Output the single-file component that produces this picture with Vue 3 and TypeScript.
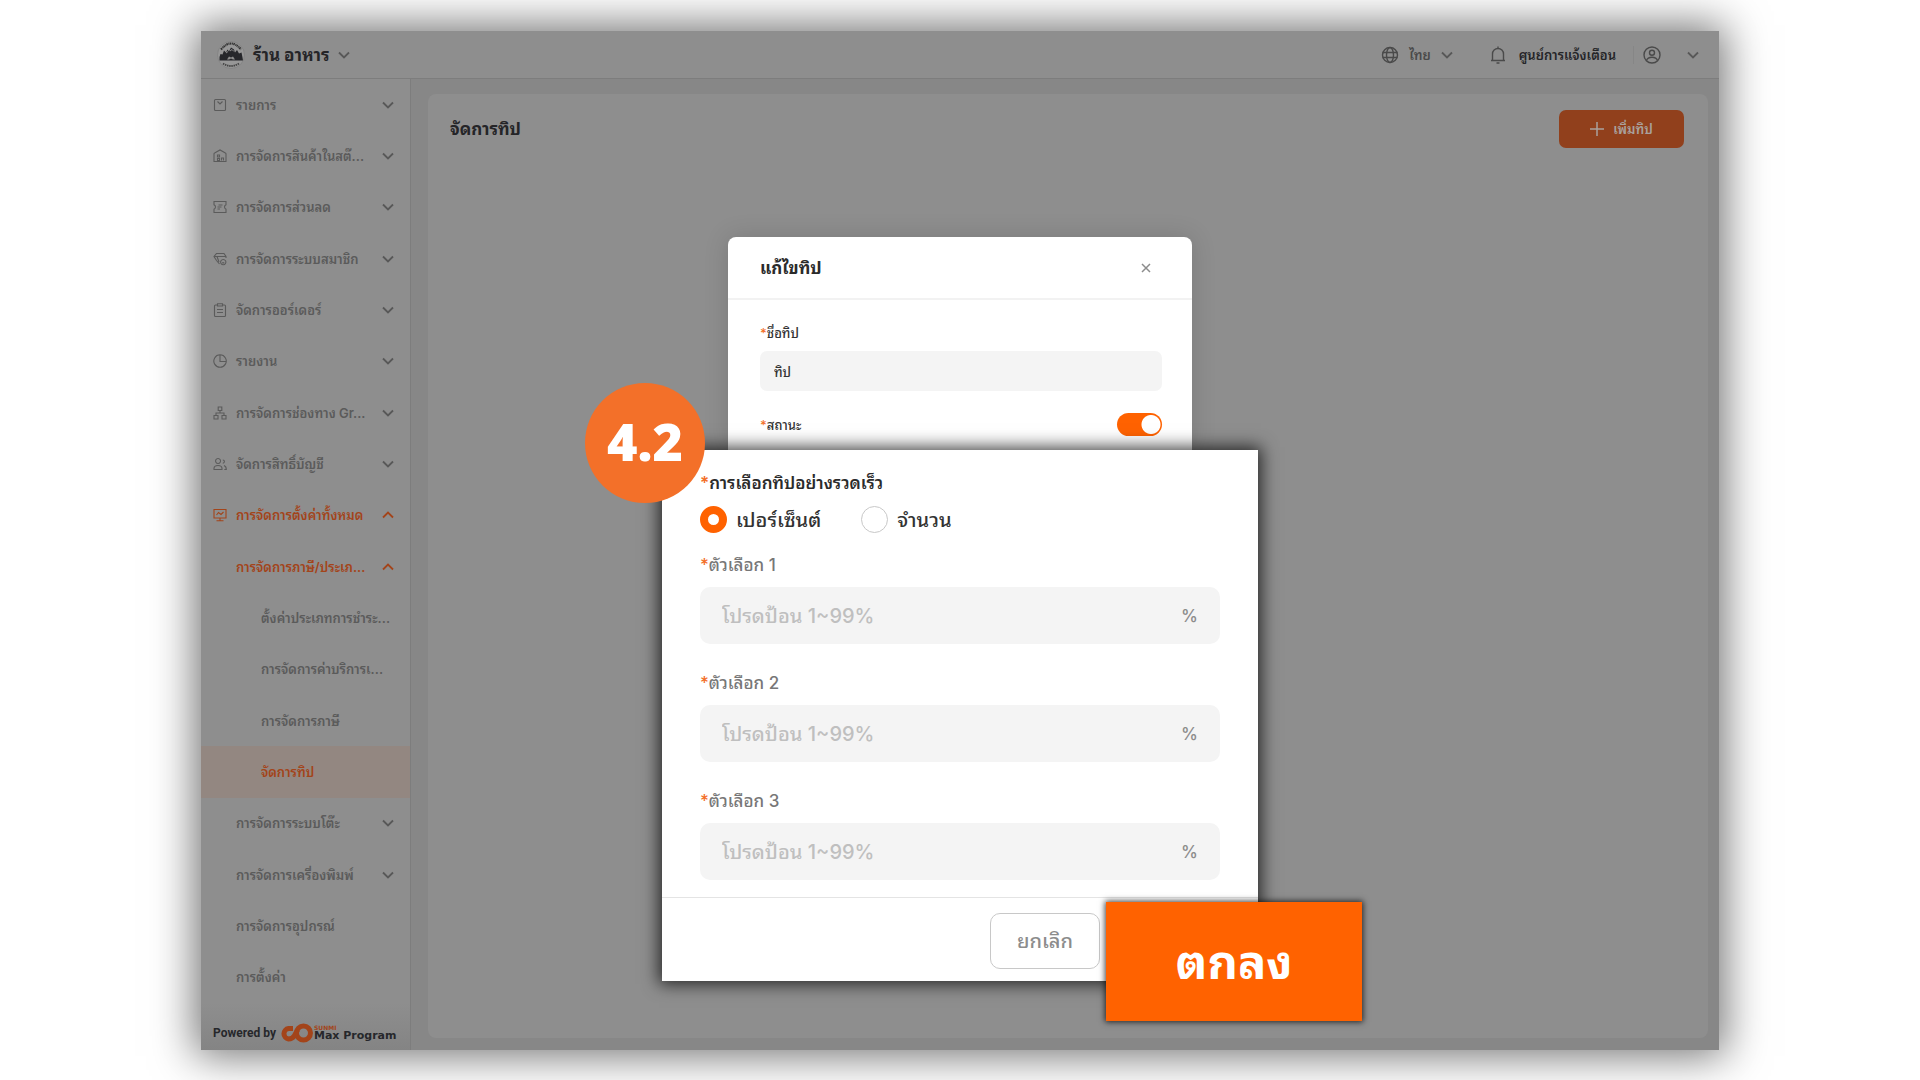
<script setup lang="ts">
import { ref } from 'vue'

interface MenuItem {
  label: string
  level: 1 | 2 | 3
  icon?: string
  arrow?: 'down' | 'up'
  tone?: 'accent' | 'active'
}

const menu: MenuItem[] = [
  { label: 'รายการ', level: 1, icon: 'list', arrow: 'down' },
  { label: 'การจัดการสินค้าในสต๊...', level: 1, icon: 'stock', arrow: 'down' },
  { label: 'การจัดการส่วนลด', level: 1, icon: 'coupon', arrow: 'down' },
  { label: 'การจัดการระบบสมาชิก', level: 1, icon: 'member', arrow: 'down' },
  { label: 'จัดการออร์เดอร์', level: 1, icon: 'order', arrow: 'down' },
  { label: 'รายงาน', level: 1, icon: 'report', arrow: 'down' },
  { label: 'การจัดการช่องทาง Gr...', level: 1, icon: 'channel', arrow: 'down' },
  { label: 'จัดการสิทธิ์บัญชี', level: 1, icon: 'users', arrow: 'down' },
  { label: 'การจัดการตั้งค่าทั้งหมด', level: 1, icon: 'settings', arrow: 'up', tone: 'accent' },
  { label: 'การจัดการภาษี/ประเภ...', level: 2, arrow: 'up', tone: 'accent' },
  { label: 'ตั้งค่าประเภทการชำระ...', level: 3 },
  { label: 'การจัดการค่าบริการเ...', level: 3 },
  { label: 'การจัดการภาษี', level: 3 },
  { label: 'จัดการทิป', level: 3, tone: 'active' },
  { label: 'การจัดการระบบโต๊ะ', level: 2, arrow: 'down' },
  { label: 'การจัดการเครื่องพิมพ์', level: 2, arrow: 'down' },
  { label: 'การจัดการอุปกรณ์', level: 2 },
  { label: 'การตั้งค่า', level: 2 },
]

const icons: Record<string, string> = {
  list: 'M1.5 2.5a1 1 0 0 1 1-1h9a1 1 0 0 1 1 1v9a1 1 0 0 1-1 1h-9a1 1 0 0 1-1-1zM4.5 3.5l2.5 2.5 2.5-2.5',
  stock: 'M1 12.500V5q0-.700.600-1L7 1l5.400 3q.600.300.600 1v7.500zM4.500 6h2v2h-2zM4.500 9.500h2v2h-2zM8.500 11.500v-2.500h2v2.500',
  coupon: 'M1 1.500h12v3.300q-1.500.700-1.500 2.200t1.500 2.200v3.300H1V9.200q1.500-.700 1.500-2.200T1 4.800zM5.500 5h4M4.500 7h4M4.500 9h2.500',
  member: 'M13 6V4.500l-2-3H3.500L1 4.500l2.500 4 3 3.500M1 4.500h12M4 4.500l2 5.500M10.200 7.500a2.600 2.600 0 1 0 .1 0zM9.200 10.500q1 .8 2 0',
  order: 'M4 2H2.500a1 1 0 0 0-1 1v9.500a1 1 0 0 0 1 1h9a1 1 0 0 0 1-1V3a1 1 0 0 0-1-1H10M4.500.700h5v2.300h-5zM4 6.500h6M4 9.500h6',
  report: 'M7 .800a6.200 6.200 0 1 0 .1 0zM7 1v6.500h6',
  channel: 'M5.200 1h3.600v3.500H5.200zM7 4.500V7M3 9.500V7h8v2.500M1 9.500h4V13H1zM9 9.500h4V13H9z',
  users: 'M5 1.500a2.500 2.500 0 1 0 .1 0zM1 12.500v-1q0-3 4-3t4 3v1zM9.800 3a1.600 1.600 0 1 1 0 3.200M11 8.500q2.300.800 2.300 4h-2',
  settings: 'M1 1.500h12v8.500H1zM7 10v2.500M3.500 12.800h7M3.500 7l2-2.500 2.500 2 2.500-2.500',
}

const options = [1, 2, 3]
const tipName = ref('ทิป')
const enabled = ref(true)
const mode = ref('percent')
const values = ref<string[]>(['', '', ''])
</script>

<template>
  <div class="stage">
    <div class="window">
      <header class="topbar">
        <button class="plain shop" type="button">
          <svg class="shop-logo" viewBox="0 0 28 28" aria-hidden="true">
            <circle cx="14" cy="14" r="13.500" fill="#979797" stroke="#7c7c7c" stroke-width=".6" />
            <path d="M4 8.500Q14-3.500 24 8.500" fill="none" stroke="#333" stroke-width="2.200" stroke-dasharray="1.500 .6 1 .5" />
            <path d="M2.500 16l1-3 2 .5L7 9.500l2 2 1.500-3 1.500 2 2-4 3 2 1 3 2-2.500 2 3.500 2.500-1 1 5 .5 3H2.500z" fill="#26272b" />
            <path d="M10 18.500l2-3 2 1 2-1 2 3h-2l-2-1-2 1z" fill="#8e8e8e" />
            <path d="M9 12l2-1.500M13 10l2-1.500 2 2" stroke="#8e8e8e" fill="none" />
            <path d="M6 22.500q8 5 16 0" fill="none" stroke="#444" stroke-width="1.800" stroke-dasharray="1.500 .7" />
          </svg>
          <span>ร้าน อาหาร</span>
          <svg class="chev" viewBox="0 0 12 8"><path d="M1 1.500l5 5 5-5" /></svg>
        </button>
        <div class="tools">
          <button class="plain lang" type="button">
            <svg class="tool-icon globe" viewBox="0 0 18 18" aria-hidden="true">
              <circle cx="9" cy="9" r="7.500" /><ellipse cx="9" cy="9" rx="3.500" ry="7.500" /><path d="M1.500 6.500h15M1.500 11.500h15" />
            </svg>
            <span>ไทย</span>
            <svg class="chev" viewBox="0 0 12 8"><path d="M1 1.500l5 5 5-5" /></svg>
          </button>
          <button class="plain notice" type="button">
            <svg class="tool-icon bell" viewBox="0 0 18 18" aria-hidden="true">
              <path d="M9 .5v1.500M2 14.500h14M3.500 14.500V8a5.500 5.500 0 0 1 11 0v6.500M7.500 17h3" />
            </svg>
            <span>ศูนย์การแจ้งเตือน</span>
          </button>
          <button class="plain account" type="button" aria-label="บัญชี">
            <svg class="tool-icon" viewBox="0 0 18 18" aria-hidden="true">
              <circle cx="9" cy="9" r="8" /><circle cx="9" cy="6.800" r="2.500" /><path d="M3.500 14.500q1-3.300 5.500-3.300t5.500 3.300" />
            </svg>
            <svg class="chev" viewBox="0 0 12 8"><path d="M1 1.500l5 5 5-5" /></svg>
          </button>
        </div>
      </header>

      <div class="body">
        <aside class="sidebar">
          <nav class="menu">
            <a
              v-for="item in menu"
              :key="item.label"
              href="#"
              class="menu-item"
              :class="['level-' + item.level, item.tone]"
            >
              <svg v-if="item.icon" class="menu-icon" viewBox="0 0 14 14" aria-hidden="true"><path :d="icons[item.icon]" /></svg>
              <span class="menu-label">{{ item.label }}</span>
              <svg v-if="item.arrow" class="chev" :class="item.arrow" viewBox="0 0 12 8"><path d="M1 1.500l5 5 5-5" /></svg>
            </a>
          </nav>
          <footer class="powered">
            <span>Powered by</span>
            <svg class="brand-mark" viewBox="0 0 34 20" aria-hidden="true">
              <circle cx="23.500" cy="10" r="7" />
              <path d="M13 5.500H8.500a5.300 5.300 0 0 0 0 10.500Q12.500 16 14.500 12.500L17.500 7" />
            </svg>
            <span class="brand"><small>SUNMI</small><b>Max Program</b></span>
          </footer>
        </aside>
        <main class="content">
          <section class="card">
            <h1>จัดการทิป</h1>
            <button class="add" type="button">
              <svg viewBox="0 0 14 14" aria-hidden="true"><path d="M7 0v14M0 7h14" /></svg>
              <span>เพิ่มทิป</span>
            </button>
          </section>
        </main>
      </div>
    </div>

    <form class="dialog" @submit.prevent>
      <section class="upper">
        <div class="upper-head">
          <h2>แก้ไขทิป</h2>
          <button class="plain close" type="button" aria-label="ปิด">
            <svg viewBox="0 0 10 10"><path d="M1 1l8 8M9 1l-8 8" /></svg>
          </button>
        </div>
        <div class="upper-body">
          <label class="small-label" for="tip-name"><i>*</i>ชื่อทิป</label>
          <input id="tip-name" v-model="tipName" class="name-input" type="text">
          <div class="status">
            <label class="small-label" for="tip-status"><i>*</i>สถานะ</label>
            <input id="tip-status" v-model="enabled" class="switch" type="checkbox" role="switch">
          </div>
        </div>
      </section>

      <section class="lower">
        <div class="lower-body">
          <h3 id="quick"><i>*</i>การเลือกทิปอย่างรวดเร็ว</h3>
          <div class="radios" role="radiogroup" aria-labelledby="quick">
            <label><input v-model="mode" type="radio" name="mode" value="percent"><span>เปอร์เซ็นต์</span></label>
            <label><input v-model="mode" type="radio" name="mode" value="amount"><span>จำนวน</span></label>
          </div>
          <div v-for="n in options" :key="n" class="option">
            <label :for="'option-' + n"><i>*</i>ตัวเลือก {{ n }}</label>
            <div class="field">
              <input :id="'option-' + n" v-model="values[n - 1]" type="text" placeholder="โปรดป้อน 1~99%">
              <span>%</span>
            </div>
          </div>
        </div>
        <div class="actions">
          <button class="cancel" type="button">ยกเลิก</button>
        </div>
        <span class="step">4.2</span>
        <button class="confirm" type="submit">ตกลง</button>
      </section>
    </form>
  </div>
</template>

<style>
body {
  background: #fff;
}
</style>

<style scoped>
* {
  box-sizing: border-box;
}

.stage {
  position: relative;
  display: flex;
  min-height: 100vh;
  padding: 31px 201px 30px;
  overflow: hidden;
  font-family: Inter, "Noto Sans Thai Looped", "Noto Looped Thai", "Sukhumvit Set", Thonburi, Loma, Waree, Garuda, "Noto Sans Thai", sans-serif;
  font-weight: 500;
  color: #333;
}

button,
input {
  font: inherit;
}

h1,
h2,
h3 {
  margin: 0;
}

i {
  font-style: normal;
  color: #f37029;
}

.plain {
  display: flex;
  align-items: center;
  padding: 0;
  border: 0;
  background: none;
  color: inherit;
}

.chev {
  flex: none;
  width: 12px;
  height: 8px;
  fill: none;
  stroke: #585858;
  stroke-width: 1.8;
}

.chev.up {
  transform: rotate(180deg);
}

.window {
  flex: 1;
  display: flex;
  flex-direction: column;
  background: #8e8e8e;
  box-shadow: 0 0 40px 6px rgba(0, 0, 0, 0.55);
}

.topbar {
  display: flex;
  align-items: center;
  justify-content: space-between;
  height: 48px;
  padding: 0 20px 0 16px;
  border-bottom: 1px solid #7d7d7d;
  color: #252528;
}

.shop {
  gap: 8px;
  font-size: 17px;
  font-weight: 700;
  line-height: 20px;
}

.shop-logo {
  width: 28px;
  height: 28px;
}

.tools {
  display: flex;
  align-items: center;
  font-size: 13px;
}

.tool-icon {
  width: 18px;
  height: 18px;
  fill: none;
  stroke: #4a4a4a;
  stroke-width: 1.4;
}

.lang {
  gap: 10px;
  margin-right: 36px;
  color: #4a4a4a;
  font-weight: 600;
}

.notice {
  gap: 12px;
  margin-right: 17px;
  font-weight: 600;
}

.account {
  gap: 26px;
  padding-left: 9px;
  border-left: 1px solid #868686;
}

.body {
  flex: 1;
  display: flex;
}

.sidebar {
  flex: none;
  display: flex;
  flex-direction: column;
  width: 210px;
  border-right: 1px solid #7d7d7d;
}

.menu {
  flex: 1;
  display: flex;
  flex-direction: column;
}

.menu-item {
  flex: 1;
  display: flex;
  align-items: center;
  min-height: 40px;
  padding: 0 16px 0 12px;
  color: #5b5b5b;
  font-size: 13px;
  font-weight: 600;
  line-height: 24px;
  text-decoration: none;
  white-space: nowrap;
}

.menu-icon {
  flex: none;
  width: 14px;
  height: 14px;
  margin-right: 9px;
  fill: none;
  stroke: currentColor;
  stroke-width: 1.1;
}

.menu-label {
  flex: 1;
  min-width: 0;
}

.level-2 {
  padding-left: 35px;
}

.level-3 {
  padding-left: 60px;
}

.accent,
.active {
  color: #a3441a;
}

.accent .chev {
  stroke: #a3441a;
}

.active {
  background: #938781;
}

.powered {
  display: flex;
  align-items: center;
  height: 47px;
  padding: 12px 8px 0 12px;
  background: linear-gradient(#8e8e8e, #848484);
  color: #26272b;
  font-family: Roboto, sans-serif;
  font-size: 12px;
  font-weight: 700;
  white-space: nowrap;
}

.brand-mark {
  width: 34px;
  height: 20px;
  margin-left: 4px;
  fill: none;
  stroke: #a3441a;
  stroke-width: 5;
}

.brand {
  display: flex;
  flex-direction: column;
  font-family: "DejaVu Sans", sans-serif;
  font-size: 11px;
  line-height: 11px;
}

.brand small {
  color: #a3441a;
  font-size: 6px;
  line-height: 5px;
}

.content {
  flex: 1;
  display: flex;
  padding: 15px 11px 12px 17px;
  background: #878787;
}

.card {
  flex: 1;
  display: flex;
  align-items: flex-start;
  justify-content: space-between;
  padding: 16px 24px 16px 22px;
  border-radius: 8px;
  background: #8e8e8e;
}

.card h1 {
  color: #252528;
  font-size: 17px;
  line-height: 38px;
}

.add {
  display: flex;
  align-items: center;
  justify-content: center;
  gap: 9px;
  width: 125px;
  height: 38px;
  padding: 0;
  border: 0;
  border-radius: 7px;
  background: #91401c;
  color: #a9a19d;
  font-size: 13px;
  font-weight: 600;
  line-height: 16px;
}

.add svg {
  width: 14px;
  height: 14px;
  stroke: #a9a19d;
  stroke-width: 1.500;
}

.dialog {
  position: absolute;
  top: 237px;
  left: 50%;
  display: flex;
  flex-direction: column;
  align-items: center;
  width: 596px;
  transform: translateX(-50%);
}

.upper {
  width: 464px;
  border-radius: 8px 8px 0 0;
  background: #fff;
  box-shadow: 0 0 24px rgba(0, 0, 0, 0.15);
}

.upper-head {
  display: flex;
  align-items: center;
  justify-content: space-between;
  height: 63px;
  padding: 0 41px 0 32px;
  border-bottom: 2px solid #f2f2f2;
}

.upper-head h2 {
  color: #2b2b2b;
  font-size: 17px;
  line-height: 20px;
}

.close svg {
  width: 10px;
  height: 10px;
  stroke: #8c8c8c;
  stroke-width: 1.500;
}

.upper-body {
  display: flex;
  flex-direction: column;
  padding: 21px 30px 14px 32px;
}

.small-label {
  font-size: 13px;
  line-height: 24px;
}

.name-input {
  height: 40px;
  margin: 6px 0 22px;
  padding: 0 14px;
  border: 0;
  border-radius: 7px;
  background: #f4f4f4;
  color: #333;
  font-size: 13px;
}

.status {
  display: flex;
  align-items: center;
  justify-content: space-between;
  height: 23px;
}

.switch {
  appearance: none;
  width: 45px;
  height: 23px;
  margin: 0;
  border-radius: 12px;
  background: radial-gradient(circle at 34px 50%, #fff 9px, #ff6200 10px);
}

.lower {
  position: relative;
  width: 100%;
  background: #fff;
  box-shadow: 0 0 16px 3px rgba(0, 0, 0, 0.75);
}

.lower-body {
  padding: 17px 38px;
}

.lower h3 {
  margin-bottom: 7px;
  color: #2b2b2b;
  font-size: 17px;
  font-weight: 600;
  line-height: 32px;
}

.radios {
  display: flex;
  gap: 40px;
  margin-bottom: 18px;
}

.radios label {
  display: flex;
  align-items: center;
  gap: 9px;
  height: 27px;
  font-size: 20px;
  line-height: 24px;
  white-space: nowrap;
}

.radios input {
  appearance: none;
  width: 27px;
  height: 27px;
  margin: 0;
  border: 1px solid #c8c8c8;
  border-radius: 50%;
}

.radios input:checked {
  border: 8px solid #ff6200;
}

.option + .option {
  margin-top: 25px;
}

.option label {
  display: block;
  margin-bottom: 8px;
  color: #777;
  font-size: 17px;
  line-height: 28px;
}

.field {
  display: flex;
  align-items: center;
  height: 57px;
  padding: 0 22px;
  border-radius: 10px;
  background: #f4f4f4;
  color: #8c8c8c;
  font-size: 17px;
}

.field input {
  flex: 1;
  min-width: 0;
  height: 57px;
  padding: 0;
  border: 0;
  background: none;
  font-size: 20px;
}

.field input::placeholder {
  color: #bfbfbf;
  opacity: 1;
}

.actions {
  display: flex;
  padding: 15px 158px 12px;
  justify-content: flex-end;
  border-top: 1px solid #e4e4e4;
}

.cancel {
  width: 110px;
  height: 56px;
  padding: 0;
  border: 1px solid #c8c8c8;
  border-radius: 10px;
  background: #fff;
  color: #8c8c8c;
  font-size: 20px;
  line-height: 24px;
}

.step {
  position: absolute;
  top: -67px;
  left: -77px;
  width: 120px;
  height: 120px;
  border-radius: 50%;
  background: #f37029;
  color: #fff;
  font-family: "Open Sans", sans-serif;
  font-size: 52px;
  font-weight: 800;
  line-height: 116px;
  text-align: center;
}

.confirm {
  position: absolute;
  right: -104px;
  bottom: -40px;
  width: 256px;
  height: 119px;
  padding: 0;
  border: 0;
  background: #ff6200;
  box-shadow: 0 0 6px 1px rgba(0, 0, 0, 0.75);
  color: #fff;
  font-size: 47px;
  font-weight: 700;
  line-height: 56px;
}
</style>
